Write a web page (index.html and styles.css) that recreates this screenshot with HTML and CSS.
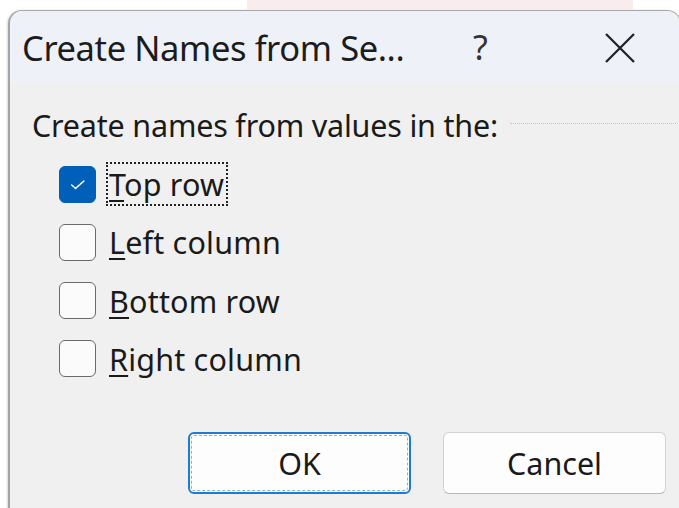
FILE: index.html
```html
<!DOCTYPE html>
<html lang="en">
<head>
<meta charset="utf-8">
<title>Create Names from Selection</title>
<link rel="stylesheet" href="styles.css">
</head>
<body>
  <div class="backdrop">
    <div class="backdrop-tab"></div>
  </div>
  <div class="dialog">
    <div class="titlebar">
      <span class="title">Create Names from Se...</span>
      <span class="help">?</span>
      <span class="close">
        <svg viewBox="0 0 30 30" width="30" height="30" aria-hidden="true">
          <path d="M1 1 L29 29 M29 1 L1 29" stroke="#1f1f1f" stroke-width="2.2" fill="none"/>
        </svg>
      </span>
    </div>
    <div class="content">
      <div class="group-label">
        <span>Create names from values in the:</span>
        <span class="group-rule"></span>
      </div>
      <div class="options">
        <label class="option">
          <span class="box checked">
            <svg viewBox="0 0 36 36" width="36" height="36" aria-hidden="true">
              <path d="M12 19 L16 22.5 L24.5 15" stroke="#ffffff" stroke-width="1.6" stroke-dasharray="2.4 1.4" fill="none" stroke-linecap="round"/>
            </svg>
          </span>
          <span class="text focus"><u>T</u>op row</span>
        </label>
        <label class="option">
          <span class="box"></span>
          <span class="text"><u>L</u>eft column</span>
        </label>
        <label class="option">
          <span class="box"></span>
          <span class="text"><u>B</u>ottom row</span>
        </label>
        <label class="option">
          <span class="box"></span>
          <span class="text"><u>R</u>ight column</span>
        </label>
      </div>
      <div class="buttons">
        <button class="btn default">OK</button>
        <button class="btn">Cancel</button>
      </div>
    </div>
  </div>
</body>
</html>
```

FILE: styles.css
```css
html, body {
  margin: 0;
  padding: 0;
  width: 679px;
  height: 508px;
  overflow: hidden;
  background: #ffffff;
  font-family: "Noto Sans", "Open Sans", sans-serif;
  color: #1a1a1a;
}

/* window behind the dialog */
.backdrop {
  height: 10px;
  display: flex;
}

.backdrop-tab {
  margin-left: 247px;
  width: 386px;
  background: #f9ecec;
}

.dialog {
  margin-left: 8px;
  width: 670px;
  height: 500px;
  border: 1px solid #a8a8a8;
  border-left: 2px solid #a4a4a4;
  border-radius: 14px 14px 0 0;
  box-shadow: -1px 0 2px rgba(0, 0, 0, 0.15);
  overflow: hidden;
  background: #f0f0f0;
  display: flex;
  flex-direction: column;
}

.titlebar {
  height: 72px;
  flex: none;
  background: #eef1f8;
  display: flex;
  align-items: center;
  color: #1c1c1c;
}

.title {
  padding-left: 12px;
  font-size: 34.5px;
  letter-spacing: -0.4px;
  width: 451px;
  flex: none;
}

.help {
  font-size: 34px;
  color: #333333;
  width: 132px;
  flex: none;
}

.close {
  display: flex;
  margin-top: 2px;
}

.content {
  flex: 1;
  padding: 24px 0 0 22px;
  display: flex;
  flex-direction: column;
  font-size: 30.5px;
}

.group-label {
  display: flex;
  align-items: center;
  gap: 12px;
  height: 36px;
  letter-spacing: -0.2px;
}

.group-rule {
  flex: 1;
  height: 0;
  border-top: 1px dotted #c6c6c6;
  margin-top: -4px;
}

.options {
  display: flex;
  flex-direction: column;
  gap: 20.3px;
  padding-left: 27px;
  margin-top: 22px;
}

.option {
  display: flex;
  align-items: center;
  gap: 14px;
  height: 38px;
}

.box {
  width: 35px;
  height: 35px;
  border: 1.5px solid #6a6a6a;
  border-radius: 6px;
  background: #fbfbfb;
  flex: none;
  display: flex;
  align-items: center;
  justify-content: center;
}

.box.checked {
  background: #005fb8;
  border-color: #005fb8;
}

.box svg {
  width: 36px;
  height: 36px;
}

.text {
  line-height: 40px;
  padding: 0 2px 0 1px;
  border: 2px dotted transparent;
  margin-left: -4px;
  letter-spacing: 0.2px;
}

.text.focus {
  border-color: #222222;
}

.text u {
  text-decoration-thickness: 2px;
  text-underline-offset: 4px;
}

.buttons {
  margin-top: auto;
  margin-bottom: 17px;
  display: flex;
  justify-content: flex-end;
  gap: 32px;
  padding-right: 14px;
}

.btn {
  width: 223px;
  height: 62px;
  border: 1.5px solid #d2d2d2;
  border-bottom-color: #b8b8b8;
  border-radius: 6px;
  background: #fdfdfd;
  font-family: inherit;
  font-size: 30.5px;
  color: #1a1a1a;
  padding: 0;
}

.btn.default {
  border: 2px solid #1f7bd0;
  outline: 1px dashed #7fb3e4;
  outline-offset: -4px;
}
```
